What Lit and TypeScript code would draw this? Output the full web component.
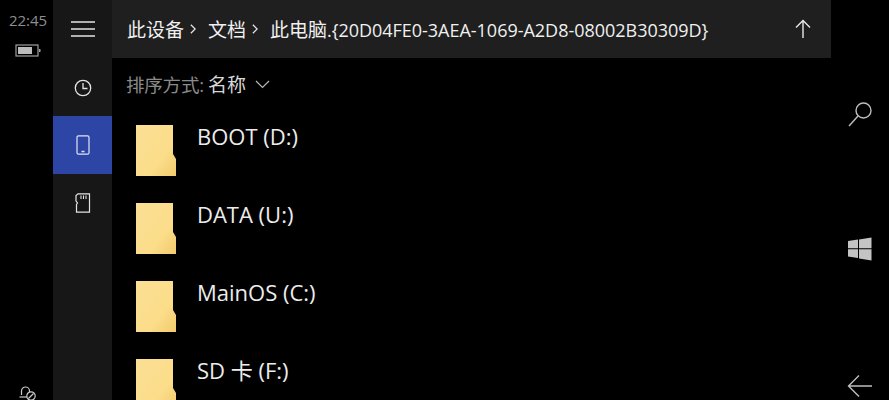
import { LitElement, html, css } from "lit";
import { customElement } from "lit/decorators.js";

const folder = html`<svg class="folder" width="40" height="51" viewBox="0 0 40 51">
  <defs><linearGradient id="fg" x1="0" y1="0" x2="1" y2="1">
    <stop offset="0" stop-color="#fbdf94"/><stop offset="0.65" stop-color="#fbdd8a"/><stop offset="1" stop-color="#f2ca6c"/>
  </linearGradient></defs>
  <path d="M0 0H37V29L40 34V51H0Z" fill="url(#fg)"/>
</svg>`;

const rows = ["BOOT (D:)", "DATA (U:)", "MainOS (C:)", "SD 卡 (F:)"];

const sep = html`<svg class="sep" width="6" height="12" viewBox="0 0 7 12" fill="none" stroke="#e8e8e8" stroke-width="1.4"><path d="M1 1L6 6L1 11"/></svg>`;

@customElement("app-root")
export class AppRoot extends LitElement {
  static styles = css`
    :host { display: block; width: 889px; height: 400px; overflow: hidden; background: #000; font-family: "Open Sans", "Noto Sans CJK SC", sans-serif; }
    .screen { display: grid; grid-template-columns: 53px 59px 719px 58px; height: 400px; overflow: hidden; }
    .status { display: flex; flex-direction: column; align-items: center; height: 400px; position: relative; }
    .time { margin-top: 11px; font-size: 15px; line-height: 18px; color: #8e8e8e; margin-left: 3px; }
    .battery { margin-top: 15px; display: block; margin-left: 2px; }
    .lock { position: absolute; left: 19px; top: 386px; }
    .nav { background: #171717; display: flex; flex-direction: column; height: 400px; }
    .nav-item { height: 58px; box-sizing: border-box; display: flex; align-items: center; justify-content: center; flex: none; }
    .nav-item.active { background: #2d45a5; }
    .nudge { padding-top: 2px; }
    .main { display: flex; flex-direction: column; min-width: 0; height: 400px; overflow: hidden; }
    .header { height: 58px; flex: none; background: #1f1f1f; display: flex; align-items: center; padding: 0 20px 0 15px; color: #f0f0f0; font-size: 18px; }
    .crumbs { flex: 1; display: flex; align-items: center; white-space: nowrap; }
    .cjk { font-size: 19px; }
    .sep { margin: 0 12px 0 6px; display: block; flex: none; }
    .last { letter-spacing: -0.02px; }
    .sort { height: 54px; flex: none; display: flex; align-items: center; padding: 0 0 2px 14px; box-sizing: border-box; font-size: 19px; color: #8a8a8a; white-space: nowrap; }
    .sort i { font-style: normal; font-size: 18.5px; letter-spacing: -0.2px; }
    .sort b { font-weight: 400; color: #d8d8d8; margin-left: 4px; }
    .sort svg { margin-left: 9px; }
    .list { padding: 13px 0 0 24px; display: flex; flex-direction: column; gap: 27px; }
    .row { display: flex; align-items: flex-start; gap: 21px; height: 51px; flex: none; }
    .row span { font-size: 22px; line-height: 26px; color: #ececec; white-space: nowrap; margin-top: -2px; }
    .side { display: block; position: relative; height: 400px; }
    .side svg { position: absolute; }
  `;

  render() {
    return html`<div class="screen">
      <div class="status">
        <div class="time">22:45</div>
        <svg class="battery" width="26" height="13" viewBox="0 0 26 13" fill="none">
          <rect x="1" y="1" width="22" height="11" stroke="#a0a0a0" stroke-width="1.2"/>
          <rect x="3" y="3" width="14" height="7" fill="#bdbdbd"/>
          <rect x="24" y="5" width="1.5" height="3" fill="#a0a0a0"/>
        </svg>
        <svg class="lock" width="18" height="20" viewBox="0 0 18 20" fill="none" stroke="#c8c8c8" stroke-width="1.2">
          <path d="M2.5 9V5a4 4 0 0 1 8 0V6"/>
          <path d="M0.5 11H8"/>
          <circle cx="12" cy="10" r="4.2"/>
          <path d="M9.5 12.5L14.5 7.5"/>
        </svg>
      </div>
      <div class="nav">
        <div class="nav-item">
          <svg width="24" height="16" viewBox="0 0 24 16" stroke="#e4e4e4" stroke-width="1.5"><path d="M0 1H24M0 8H24M0 15H24"/></svg>
        </div>
        <div class="nav-item nudge">
          <svg width="18" height="18" viewBox="0 0 18 18" fill="none" stroke="#e4e4e4" stroke-width="1.3"><circle cx="9" cy="9" r="7.7"/><path d="M9 4V9.5H13.5"/></svg>
        </div>
        <div class="nav-item active">
          <svg width="14" height="20" viewBox="0 0 14 20" fill="none" stroke="#dfe4f6" stroke-width="1.2"><rect x="1" y="0.8" width="12" height="18.4" rx="1.5"/><path d="M5.5 16.5H8.5" stroke-width="1.5"/></svg>
        </div>
        <div class="nav-item">
          <svg width="16" height="20" viewBox="0 0 16 20" fill="none" stroke="#e4e4e4" stroke-width="1.2"><path d="M3 0.8H14.5V19.2H1.5V11.5L2.5 10L1 8V2.5Z"/><path d="M6 2.5V6M8.5 2.5V6M11 2.5V6" stroke-width="1.1"/></svg>
        </div>
      </div>
      <div class="main">
        <div class="header">
          <div class="crumbs">
            <span class="cjk">此设备</span>
            ${sep}
            <span class="cjk">文档</span>
            ${sep}
            <span class="last"><span class="cjk">此电脑</span>.{20D04FE0-3AEA-1069-A2D8-08002B30309D}</span>
          </div>
          <svg width="16" height="20" viewBox="0 0 16 20" fill="none" stroke="#e8e8e8" stroke-width="1.4"><path d="M8 19V1.5M1 8.5L8 1.5L15 8.5"/></svg>
        </div>
        <div class="sort"><i>排序方式:</i><b>名称</b>
          <svg width="15" height="9" viewBox="0 0 15 9" fill="none" stroke="#b8b8b8" stroke-width="1.2"><path d="M1 1L7.5 7.5L14 1"/></svg>
        </div>
        <div class="list">
          ${rows.map((r) => html`<div class="row">${folder}<span>${r}</span></div>`)}
        </div>
      </div>
      <div class="side">
        <svg style="left:16px;top:101px" width="26" height="26" viewBox="0 0 26 26" fill="none" stroke="#bdbdbd" stroke-width="1.4"><circle cx="16.5" cy="9.5" r="7.5"/><path d="M11 15L2 25"/></svg>
        <svg style="left:17px;top:237px" width="24" height="24" viewBox="0 0 24 24" fill="#c4c4c4"><path d="M0 4L10 2.6V11.2H0ZM11 2.4L23.5 0.5V11.2H11ZM0 12.3H10V21L0 19.6ZM11 12.3H23.5V23.5L11 21.4Z"/></svg>
        <svg style="left:16px;top:374px" width="25" height="24" viewBox="0 0 25 24" fill="none" stroke="#bdbdbd" stroke-width="1.4"><path d="M25 12H2M12 1.5L1.5 12L12 22.5"/></svg>
      </div>
    </div>`;
  }
}
